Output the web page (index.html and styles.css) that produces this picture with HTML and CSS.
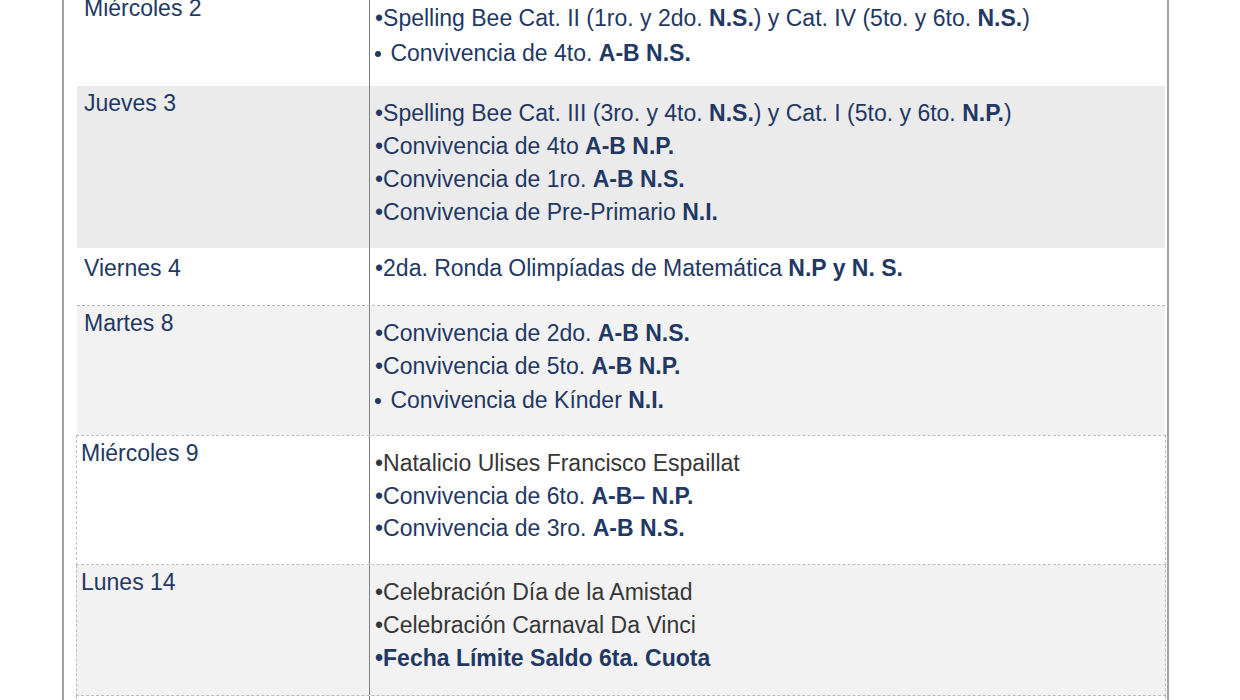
FILE: index.html
```html
<!DOCTYPE html>
<html lang="es">
<head>
    <meta charset="UTF-8">
    <meta name="viewport" content="width=device-width, initial-scale=1.0">
    <title>Calendario de actividades</title>
    <link rel="stylesheet" href="styles.css">
</head>
<body>
    <!-- Hoja del calendario -->
    <div class="sheet">
        <div class="row first">
            <div class="day">Miércoles 2</div>
            <div class="events">
                <div class="item">•Spelling Bee Cat. II (1ro. y 2do. <b>N.S.</b>) y Cat. IV (5to. y 6to. <b>N.S.</b>)</div>
                <div class="item dot-line"><span class="dot"></span> Convivencia de 4to. <b>A-B N.S.</b></div>
            </div>
        </div>

        <div class="row shade-dark">
            <div class="day">Jueves 3</div>
            <div class="events">
                <div class="item">•Spelling Bee Cat. III (3ro. y 4to. <b>N.S.</b>) y Cat. I (5to. y 6to. <b>N.P.</b>)</div>
                <div class="item">•Convivencia de 4to <b>A-B N.P.</b></div>
                <div class="item">•Convivencia de 1ro. <b>A-B N.S.</b></div>
                <div class="item">•Convivencia de Pre-Primario <b>N.I.</b></div>
            </div>
        </div>

        <div class="row single dashed-bottom">
            <div class="day">Viernes 4</div>
            <div class="events">
                <div class="item">•2da. Ronda Olimpíadas de Matemática <b>N.P y N. S.</b></div>
            </div>
        </div>

        <div class="row shade tight">
            <div class="day">Martes 8</div>
            <div class="events">
                <div class="item">•Convivencia de 2do. <b>A-B N.S.</b></div>
                <div class="item">•Convivencia de 5to. <b>A-B N.P.</b></div>
                <div class="item dot-line"><span class="dot"></span> Convivencia de Kínder <b>N.I.</b></div>
            </div>
        </div>

        <div class="row boxed">
            <div class="day">Miércoles 9</div>
            <div class="events">
                <div class="item plain">•Natalicio Ulises Francisco Espaillat</div>
                <div class="item">•Convivencia de 6to. <b>A-B– N.P.</b></div>
                <div class="item">•Convivencia de 3ro. <b>A-B N.S.</b></div>
            </div>
        </div>

        <div class="row boxed shade last">
            <div class="day">Lunes 14</div>
            <div class="events">
                <div class="item plain">•Celebración Día de la Amistad</div>
                <div class="item plain">•Celebración Carnaval Da Vinci</div>
                <div class="item"><b>•Fecha Límite Saldo 6ta. Cuota</b></div>
            </div>
        </div>

        <div class="row boxed tail">
            <div class="day"></div>
            <div class="events"></div>
        </div>
    </div>
</body>
</html>
```

FILE: styles.css
```css
html, body {
    margin: 0;
    padding: 0;
    background-color: #fff;
    font-family: "Liberation Sans", Arial, sans-serif;
    overflow: hidden;
}

.sheet {
    width: 1088px;
    min-height: 760px;
    margin: -9px 0 0 62px;
    padding: 0 2px 0 13px;
    border-left: 2px solid #a3a3a3;
    border-right: 2px solid #a3a3a3;
}

.row {
    display: grid;
    grid-template-columns: 292px 1fr;
    color: #1f3864;
    font-size: 23px;
    line-height: 32.7px;
}
.row.shade { background-color: #f2f2f2; }
.row.shade-dark { background-color: #ebebeb; }

.day {
    padding: 1px 0 0 7px;
}
.events {
    border-left: 1px solid #808080;
    padding: 11px 0 20px 5px;
}

.item b { font-weight: bold; }
.item.plain { color: #363636; }
.dot-line { padding-top: 2px; }
.dot {
    display: inline-block;
    width: 6px;
    height: 6px;
    margin-right: 3px;
    border-radius: 50%;
    background-color: #1f3864;
    vertical-align: 4px;
}

.row.first .events { padding-bottom: 17px; }
.row.tight .events { padding-bottom: 18px; }

.row.single .day { padding-top: 4px; }
.row.single .events { padding-top: 4px; padding-bottom: 20px; }
.row.dashed-bottom { border-bottom: 1px dashed #bdbdbd; }

.row.boxed {
    border: 1px dashed #bdbdbd;
    margin: 0 -1px;
}
.row.boxed + .row.boxed { border-top: 0; }
.row.boxed .day { padding-left: 4px; }
.row.boxed .events { padding-bottom: 19px; }
.row.boxed.last .events { padding-bottom: 21px; }
.row.tail .events { height: 40px; }
```
